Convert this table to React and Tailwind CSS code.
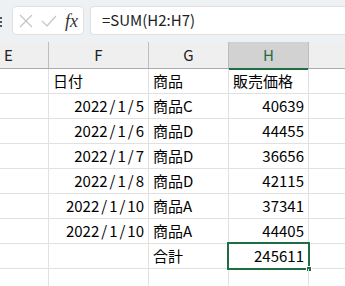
import { Fragment } from "react";

const rows = [
  { date: "2022/1/5", item: "商品C", price: "40639" },
  { date: "2022/1/6", item: "商品D", price: "44455" },
  { date: "2022/1/7", item: "商品D", price: "36656" },
  { date: "2022/1/8", item: "商品D", price: "42115" },
  { date: "2022/1/10", item: "商品A", price: "37341" },
  { date: "2022/1/10", item: "商品A", price: "44405" },
];

const font = { fontFamily: '"Noto Sans CJK JP", "Noto Sans", sans-serif' };

// slashes in dates get a little more room, like the sheet's UI font
const DateText = ({ value }) => {
  const parts = value.split("/");
  return (
    <span>
      {parts.map((p, i) => (
        <Fragment key={i}>
          {i > 0 && <span className="mx-[2px]">/</span>}
          {p}
        </Fragment>
      ))}
    </span>
  );
};

const Cell = ({ w, align = "left", children, className = "" }) => (
  <div
    className={`h-full shrink-0 border-r border-[#e1e1e1] flex items-center px-[4px] pt-[1px] ${
      align === "right" ? "justify-end" : "justify-start"
    } ${w} ${className}`}
  >
    {children}
  </div>
);

const Row = ({ e, f, g, h, fRight, hRight, selected }) => (
  <div className="flex h-[25px] border-b border-[#e1e1e1] text-[15px] text-black">
    <Cell w="w-[49px]">{e}</Cell>
    <Cell w="w-[100px]" align={fRight ? "right" : "left"}>
      {f}
    </Cell>
    <Cell w="w-[80px]">{g}</Cell>
    <Cell
      w="w-[80px]"
      align={hRight ? "right" : "left"}
      className="relative"
    >
      {h}
      {selected && (
        <div className="absolute -left-[2px] -top-[2px] -right-[2px] -bottom-[2px] border-[2px] border-[#1f6e43]">
          <div className="absolute -right-[4px] -bottom-[4px] w-[6px] h-[6px] bg-[#1f6e43] border border-white" />
        </div>
      )}
    </Cell>
    <div className="flex-1" />
  </div>
);

const FormulaBar = () => (
  <div className="h-[42px] bg-[#eef1f4] relative flex items-start pt-[6px]">
    {/* grip dots of the name box */}
    <div className="absolute left-0 top-[17px] flex flex-col gap-[2px]">
      <span className="block w-[2px] h-[2px] bg-[#555]" />
      <span className="block w-[2px] h-[2px] bg-[#555]" />
      <span className="block w-[2px] h-[2px] bg-[#555]" />
    </div>
    <div className="ml-[12px] w-[72px] h-[29px] bg-white border border-[#e0e0e0] rounded-[4px] flex items-center">
      <svg width="14" height="14" viewBox="0 0 14 14" className="ml-[6px]">
        <path d="M1 1 L13 13 M13 1 L1 13" stroke="#c4c4c4" strokeWidth="1.2" fill="none" />
      </svg>
      <svg width="16" height="12" viewBox="0 0 16 12" className="ml-[8px]">
        <path d="M1 6 L6 11 L15 1" stroke="#c4c4c4" strokeWidth="1.2" fill="none" />
      </svg>
      <span
        className="ml-[8px] text-[18px] italic text-[#333] leading-none"
        style={{ fontFamily: '"Liberation Serif", serif' }}
      >
        fx
      </span>
    </div>
    <div className="ml-[6px] flex-1 h-[29px] bg-white border border-r-0 border-[#e0e0e0] rounded-l-[4px] flex items-center pl-[11px] text-[15px] text-[#222]">
      =SUM(H2:H7)
    </div>
  </div>
);

const Header = () => (
  <div className="flex h-[27px] bg-[#efefef] border-b border-[#ababab] text-[15px] text-[#222]">
    <div className="w-[49px] shrink-0 border-r border-[#bdbdbd] flex items-center pl-[4px]">E</div>
    <div className="w-[100px] shrink-0 border-r border-[#bdbdbd] flex items-center justify-center">F</div>
    <div className="w-[80px] shrink-0 border-r border-[#bdbdbd] flex items-center justify-center">G</div>
    <div className="w-[80px] shrink-0 border-r border-[#bdbdbd] relative flex items-center justify-center bg-[#d2d2d2] text-[#1f6e43]">
      H
      <div className="absolute left-0 right-0 -bottom-[2px] h-[2px] bg-[#1f6e43]" />
    </div>
    <div className="flex-1" />
  </div>
);

export default function App() {
  return (
    <div className="w-[345px] h-[286px] overflow-hidden bg-white" style={font}>
      <FormulaBar />
      <Header />
      <Row f="日付" g="商品" h="販売価格" />
      {rows.map((r, i) => (
        <Row key={i} f={<DateText value={r.date} />} g={r.item} h={r.price} fRight hRight />
      ))}
      <Row g="合計" h="245611" hRight selected />
      <Row />
    </div>
  );
}
